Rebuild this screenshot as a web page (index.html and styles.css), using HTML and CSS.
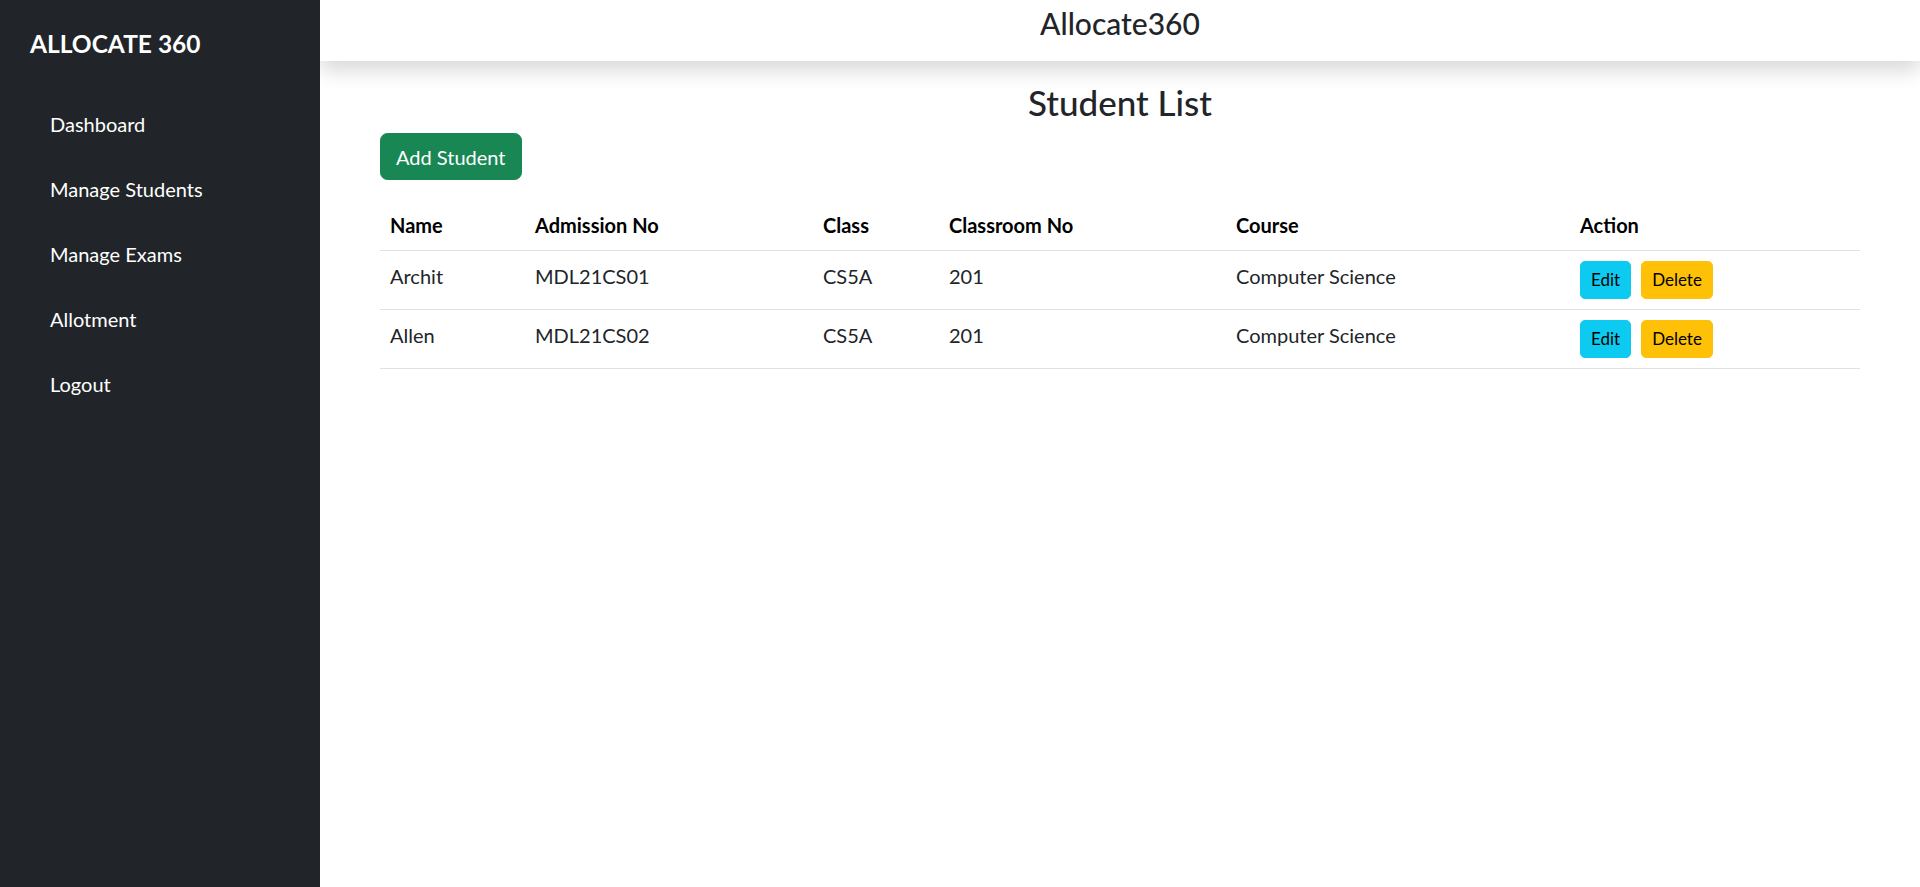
FILE: index.html
```html
<!DOCTYPE html>
<html lang="en">
<head>
<meta charset="utf-8">
<title>Allocate360 - Student List</title>
<link rel="stylesheet" href="styles.css">
</head>
<body>
<div class="layout">
  <aside class="sidebar">
    <div class="brand">ALLOCATE 360</div>
    <ul class="nav">
      <li><a class="nav-link" href="#">Dashboard</a></li>
      <li><a class="nav-link" href="#">Manage Students</a></li>
      <li><a class="nav-link" href="#">Manage Exams</a></li>
      <li><a class="nav-link" href="#">Allotment</a></li>
      <li><a class="nav-link" href="#">Logout</a></li>
    </ul>
  </aside>
  <div class="main">
    <header class="topbar">Allocate360</header>
    <section class="content">
      <h3 class="page-title">Student List</h3>
      <button class="btn btn-success">Add Student</button>
      <table class="table">
        <colgroup>
          <col class="c-name">
          <col class="c-adm">
          <col class="c-class">
          <col class="c-room">
          <col class="c-course">
          <col class="c-action">
        </colgroup>
        <thead>
          <tr>
            <th>Name</th>
            <th>Admission No</th>
            <th>Class</th>
            <th>Classroom No</th>
            <th>Course</th>
            <th>Action</th>
          </tr>
        </thead>
        <tbody>
          <tr>
            <td>Archit</td>
            <td>MDL21CS01</td>
            <td>CS5A</td>
            <td>201</td>
            <td>Computer Science</td>
            <td><div class="actions"><button class="btn-sm btn-info">Edit</button><button class="btn-sm btn-warning">Delete</button></div></td>
          </tr>
          <tr>
            <td>Allen</td>
            <td>MDL21CS02</td>
            <td>CS5A</td>
            <td>201</td>
            <td>Computer Science</td>
            <td><div class="actions"><button class="btn-sm btn-info">Edit</button><button class="btn-sm btn-warning">Delete</button></div></td>
          </tr>
        </tbody>
      </table>
    </section>
  </div>
</div>
</body>
</html>
```

FILE: styles.css
```css
* { box-sizing: border-box; }
html, body { margin: 0; padding: 0; }
body {
  font-family: Lato, "Noto Sans", "Liberation Sans", sans-serif;
  color: #212529;
  background: #fff;
  font-size: 20px;
  line-height: 1.5;
}
.layout {
  display: flex;
  min-height: 100vh;
}
.sidebar {
  width: 320px;
  flex: 0 0 320px;
  background: #212529;
  color: #fff;
  padding-top: 29px;
  position: relative;
  z-index: 2;
}
.brand {
  margin-left: 30px;
  font-size: 24.5px;
  font-weight: 700;
  line-height: 30px;
}
.nav {
  list-style: none;
  margin: 32px 0 0 0;
  padding: 0;
}
.nav-link {
  display: block;
  color: #fff;
  text-decoration: none;
  font-size: 20px;
  line-height: 30px;
  padding: 17.5px 50px;
}
.main {
  flex: 1;
  min-width: 0;
}
.topbar {
  height: 61px;
  padding-top: 5px;
  text-align: center;
  font-size: 30px;
  line-height: 36px;
  font-weight: 500;
  background: #fff;
  box-shadow: 0 10px 20px rgba(0, 0, 0, 0.15);
  position: relative;
  z-index: 1;
}
.content {
  padding: 0 60px;
}
.page-title {
  margin: 20px 0 10px 0;
  text-align: center;
  font-size: 35px;
  line-height: 42px;
  font-weight: 500;
}
.btn {
  font-family: inherit;
  font-size: 20px;
  line-height: 30px;
  padding: 7.5px 15px;
  border: 1px solid transparent;
  border-radius: 7.5px;
  cursor: pointer;
}
.btn-success {
  background: #198754;
  border-color: #198754;
  color: #fff;
}
.table {
  width: 100%;
  margin-top: 20px;
  border-collapse: collapse;
  table-layout: fixed;
  color: #212529;
}
.c-name { width: 145px; }
.c-adm { width: 288px; }
.c-class { width: 126px; }
.c-room { width: 287px; }
.c-course { width: 344px; }
.c-action { width: 290px; }
.table th,
.table td {
  padding: 10px;
  text-align: left;
  vertical-align: top;
  border-bottom: 1px solid #dee2e6;
  line-height: 30px;
  font-size: 20px;
}
.table th {
  font-weight: 700;
  color: #000;
  vertical-align: bottom;
}
.actions {
  display: flex;
  gap: 10px;
}
.btn-sm {
  font-family: inherit;
  font-size: 17px;
  line-height: 26px;
  padding: 5px 10px;
  border: 1px solid transparent;
  border-radius: 5px;
  color: #000;
  cursor: pointer;
}
.btn-info {
  background: #0dcaf0;
  border-color: #0dcaf0;
}
.btn-warning {
  background: #ffc107;
  border-color: #ffc107;
}
```
